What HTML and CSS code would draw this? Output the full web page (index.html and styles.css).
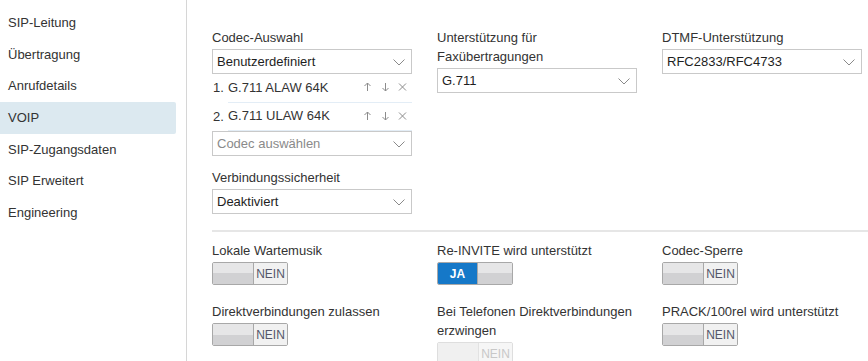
FILE: index.html
```html
<!DOCTYPE html>
<html lang="de">
<head>
<meta charset="utf-8">
<title>VOIP</title>
<link rel="stylesheet" href="styles.css">
</head>
<body>
<div class="page">
  <nav class="sidebar">
    <div class="nav-item">SIP-Leitung</div>
    <div class="nav-item">Übertragung</div>
    <div class="nav-item">Anrufdetails</div>
    <div class="nav-item active">VOIP</div>
    <div class="nav-item">SIP-Zugangsdaten</div>
    <div class="nav-item">SIP Erweitert</div>
    <div class="nav-item">Engineering</div>
  </nav>
  <main class="main">
    <section class="grid top">
      <div class="field">
        <div class="label">Codec-Auswahl</div>
        <div class="select"><span>Benutzerdefiniert</span><svg class="chev" width="12" height="7" viewBox="0 0 12 7"><path d="M0.5 0.5 L6 6 L11.5 0.5" fill="none" stroke="#8a8a8a" stroke-width="1"/></svg></div>
        <div class="codec">
          <span class="num">1.</span>
          <div class="codec-body">
            <span>G.711 ALAW 64K</span>
            <span class="acts">
              <svg width="9" height="10" viewBox="0 0 9 10"><path d="M4.5 1 V9 M1.5 4 L4.5 1 L7.5 4" fill="none" stroke="#8c8c8c" stroke-width="1"/></svg>
              <svg width="9" height="10" viewBox="0 0 9 10"><path d="M4.5 1 V9 M1.5 6 L4.5 9 L7.5 6" fill="none" stroke="#8c8c8c" stroke-width="1"/></svg>
              <svg width="9" height="10" viewBox="0 0 9 10"><path d="M1 1.5 L8 8.5 M8 1.5 L1 8.5" fill="none" stroke="#8c8c8c" stroke-width="1"/></svg>
            </span>
          </div>
        </div>
        <div class="codec">
          <span class="num">2.</span>
          <div class="codec-body">
            <span>G.711 ULAW 64K</span>
            <span class="acts">
              <svg width="9" height="10" viewBox="0 0 9 10"><path d="M4.5 1 V9 M1.5 4 L4.5 1 L7.5 4" fill="none" stroke="#8c8c8c" stroke-width="1"/></svg>
              <svg width="9" height="10" viewBox="0 0 9 10"><path d="M4.5 1 V9 M1.5 6 L4.5 9 L7.5 6" fill="none" stroke="#8c8c8c" stroke-width="1"/></svg>
              <svg width="9" height="10" viewBox="0 0 9 10"><path d="M1 1.5 L8 8.5 M8 1.5 L1 8.5" fill="none" stroke="#8c8c8c" stroke-width="1"/></svg>
            </span>
          </div>
        </div>
        <div class="select"><span class="placeholder">Codec auswählen</span><svg class="chev" width="12" height="7" viewBox="0 0 12 7"><path d="M0.5 0.5 L6 6 L11.5 0.5" fill="none" stroke="#8a8a8a" stroke-width="1"/></svg></div>
        <div class="label spaced">Verbindungssicherheit</div>
        <div class="select"><span>Deaktiviert</span><svg class="chev" width="12" height="7" viewBox="0 0 12 7"><path d="M0.5 0.5 L6 6 L11.5 0.5" fill="none" stroke="#8a8a8a" stroke-width="1"/></svg></div>
      </div>
      <div class="field">
        <div class="label">Unterstützung für<br>Faxübertragungen</div>
        <div class="select"><span>G.711</span><svg class="chev" width="12" height="7" viewBox="0 0 12 7"><path d="M0.5 0.5 L6 6 L11.5 0.5" fill="none" stroke="#8a8a8a" stroke-width="1"/></svg></div>
      </div>
      <div class="field">
        <div class="label">DTMF-Unterstützung</div>
        <div class="select"><span>RFC2833/RFC4733</span><svg class="chev" width="12" height="7" viewBox="0 0 12 7"><path d="M0.5 0.5 L6 6 L11.5 0.5" fill="none" stroke="#8a8a8a" stroke-width="1"/></svg></div>
      </div>
    </section>
    <hr class="divider">
    <section class="grid toggles">
      <div class="field">
        <div class="label">Lokale Wartemusik</div>
        <div class="toggle off"><span class="knob"></span><span class="state">NEIN</span></div>
      </div>
      <div class="field">
        <div class="label">Re-INVITE wird unterstützt</div>
        <div class="toggle on"><span class="state">JA</span><span class="knob"></span></div>
      </div>
      <div class="field">
        <div class="label">Codec-Sperre</div>
        <div class="toggle off"><span class="knob"></span><span class="state">NEIN</span></div>
      </div>
      <div class="field">
        <div class="label">Direktverbindungen zulassen</div>
        <div class="toggle off"><span class="knob"></span><span class="state">NEIN</span></div>
      </div>
      <div class="field">
        <div class="label">Bei Telefonen Direktverbindungen<br>erzwingen</div>
        <div class="toggle off disabled"><span class="knob"></span><span class="state">NEIN</span></div>
      </div>
      <div class="field">
        <div class="label">PRACK/100rel wird unterstützt</div>
        <div class="toggle off"><span class="knob"></span><span class="state">NEIN</span></div>
      </div>
    </section>
  </main>
</div>
</body>
</html>
```

FILE: styles.css
```css
html, body {
  margin: 0;
  padding: 0;
  background: #fff;
}
body {
  font-family: "Liberation Sans", Arial, sans-serif;
  font-size: 13px;
  color: #333;
  width: 868px;
  height: 361px;
  overflow: hidden;
}
.page {
  display: flex;
  height: 361px;
}
.sidebar {
  width: 186px;
  flex: none;
  border-right: 1px solid #d6d6d6;
  padding-top: 7px;
  box-sizing: content-box;
}
.nav-item {
  height: 31.67px;
  line-height: 31.67px;
  padding-left: 8px;
  width: 168px;
  color: #333;
  border-radius: 0 2px 2px 0;
}
.nav-item.active {
  background: #dce9f0;
}
.main {
  flex: 1;
  padding: 28px 0 0 25px;
  min-width: 0;
}
.grid {
  display: grid;
  grid-template-columns: 200px 200px 200px;
  column-gap: 25px;
}
.top {
  align-items: start;
}
.label {
  line-height: 19px;
  margin-bottom: 2px;
  color: #333;
}
.label.spaced {
  margin-top: 12px;
}
.select {
  height: 25px;
  box-sizing: border-box;
  border: 1px solid #c9c9c9;
  background: #fff;
  display: flex;
  align-items: center;
  justify-content: space-between;
  padding: 0 6px 0 4px;
  color: #1e1e1e;
}
.placeholder {
  color: #8a8a8a;
}
.chev {
  display: block;
  margin-top: 1px;
}
.codec {
  display: flex;
  height: 28.5px;
}
.num {
  width: 15px;
  padding-left: 1px;
  line-height: 28px;
  color: #333;
}
.codec-body {
  flex: 1;
  display: flex;
  justify-content: space-between;
  align-items: center;
  border-bottom: 1px solid #e3edf6;
  color: #333;
  padding-bottom: 1px;
}
.acts {
  display: flex;
  gap: 8.5px;
  padding-right: 5px;
}
.acts svg {
  display: block;
}
.divider {
  border: 0;
  border-top: 2px solid #e6e6e6;
  margin: 16px 0 0 0;
  height: 0;
}
.toggles {
  padding-top: 9px;
  row-gap: 17px;
  align-items: start;
}
.toggle {
  width: 76px;
  height: 23px;
  box-sizing: border-box;
  border: 1px solid #a8a8a8;
  border-radius: 2px;
  display: flex;
  overflow: hidden;
  font-size: 12px;
}
.knob {
  background: linear-gradient(#e6e6e7 0, #e6e6e7 50%, #d1d1d3 50%, #d1d1d3 100%);
}
.toggle.off .knob {
  width: 40px;
  border-right: 1px solid #a8a8a8;
}
.toggle.off .state {
  flex: 1;
  background: #f1f1f1;
  color: #54566a;
  display: flex;
  align-items: center;
  justify-content: center;
}
.toggle.on .state {
  width: 39px;
  background: #1578c8;
  color: #fff;
  display: flex;
  align-items: center;
  justify-content: center;
  font-weight: bold;
  border-right: 1px solid #a8a8a8;
}
.toggle.on .knob {
  flex: 1;
}
.toggle.disabled {
  border-color: #dedede;
}
.toggle.disabled .knob {
  background: #f0f0f0;
  border-right-color: #e2e2e2;
}
.toggle.disabled .state {
  background: #f6f6f6;
  color: #c8c8c8;
}
```
